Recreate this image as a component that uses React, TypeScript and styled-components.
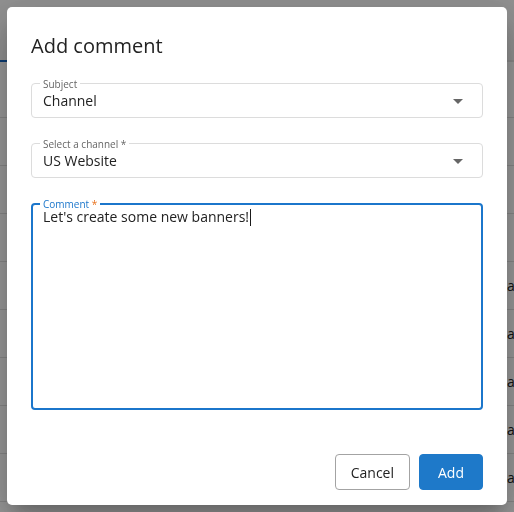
import { createGlobalStyle, styled } from "styled-components";

const GlobalStyle = createGlobalStyle`
  html, body {
    margin: 0;
    padding: 0;
    font-family: "Open Sans", "Noto Sans", Arial, sans-serif;
    background: #ffffff;
  }
`;

// page behind the dialog
const Page = styled.div`
  width: 514px;
  height: 512px;
  overflow: hidden;
`;

const Header = styled.div`
  height: 60px;
  background: #f2f2f2;
  border-bottom: 2px solid #e3e3e3;
  position: relative;
`;

const TabIndicator = styled.div`
  position: absolute;
  left: 0;
  bottom: -2px;
  width: 120px;
  height: 2px;
  background: #1565c0;
`;

const Row = styled.div<{ $first?: boolean }>`
  height: ${(p) => (p.$first ? 55 : 47)}px;
  border-bottom: 1px solid #e0e0e0;
  display: grid;
  grid-template-columns: 507px 1fr;
  align-items: center;
  font-size: 14px;
  color: #222;
`;

const Cell = styled.div`
  white-space: nowrap;
`;

// modal
const Backdrop = styled.div`
  position: fixed;
  inset: 0;
  background: rgba(0, 0, 0, 0.4);
  display: flex;
  align-items: center;
  justify-content: center;
`;

const Dialog = styled.div`
  width: 500px;
  height: 498px;
  box-sizing: border-box;
  padding: 25px 24px 15px;
  background: #fff;
  border-radius: 5px;
  box-shadow: 0 11px 15px -7px rgba(0, 0, 0, 0.2),
    0 24px 38px 3px rgba(0, 0, 0, 0.14), 0 9px 46px 8px rgba(0, 0, 0, 0.12);
  display: flex;
  flex-direction: column;
`;

const Title = styled.h2`
  margin: 0;
  font-size: 20px;
  line-height: 28px;
  font-weight: 400;
  color: #222;
`;

const Form = styled.div`
  margin-top: 23px;
  display: flex;
  flex-direction: column;
  gap: 25px;
`;

const Field = styled.div<{ $focused?: boolean; $height?: number }>`
  position: relative;
  box-sizing: border-box;
  height: ${(p) => p.$height ?? 35}px;
  border: ${(p) => (p.$focused ? "2px solid #1b76cb" : "1px solid #dcdcdc")};
  border-radius: 4px;
  padding: ${(p) => (p.$focused ? "2px 10px" : "7px 11px 6px")};
  display: flex;
  align-items: ${(p) => (p.$focused ? "flex-start" : "center")};
`;

const Label = styled.span<{ $focused?: boolean }>`
  position: absolute;
  top: ${(p) => (p.$focused ? -7 : -6)}px;
  left: ${(p) => (p.$focused ? 7 : 8)}px;
  padding: 0 3px;
  background: #fff;
  font-size: 10px;
  line-height: 12px;
  color: ${(p) => (p.$focused ? "#1b76cb" : "#666")};
`;

const Required = styled.span<{ $focused?: boolean }>`
  color: ${(p) => (p.$focused ? "#e8711c" : "inherit")};
`;

const Value = styled.div`
  flex: 1;
  font-size: 14px;
  line-height: 20px;
  color: #222;
  white-space: nowrap;
`;

const Caret = styled.span`
  display: inline-block;
  width: 1px;
  height: 17px;
  margin-left: 1px;
  vertical-align: -4px;
  background: #1a1a1a;
`;

const Arrow = styled.span`
  width: 0;
  height: 0;
  margin-right: 8px;
  border-left: 5px solid transparent;
  border-right: 5px solid transparent;
  border-top: 5px solid #666;
`;

const Actions = styled.div`
  margin-top: auto;
  display: flex;
  justify-content: flex-end;
  gap: 9px;
`;

const Button = styled.button<{ $primary?: boolean }>`
  height: 36px;
  min-width: 64px;
  box-sizing: border-box;
  padding: 0 15px;
  border-radius: 4px;
  font-family: inherit;
  font-size: 14px;
  cursor: pointer;
  border: 1px solid ${(p) => (p.$primary ? "#1e79c9" : "#a3a3a3")};
  background: ${(p) => (p.$primary ? "#1e79c9" : "#fff")};
  color: ${(p) => (p.$primary ? "#fff" : "#222")};
`;

const App = () => {
  const rowText = ["", "", "", "", "a", "a", "a", "a", "a"];
  return (
    <>
      <GlobalStyle />
      <Page>
        <Header>
          <TabIndicator />
        </Header>
        {rowText.map((t, i) => (
          <Row key={i} $first={i === 0}>
            <Cell />
            <Cell>{t && "abc"}</Cell>
          </Row>
        ))}
      </Page>

      <Backdrop>
        <Dialog>
          <Title>Add comment</Title>
          <Form>
            <Field>
              <Label>Subject</Label>
              <Value>Channel</Value>
              <Arrow />
            </Field>
            <Field>
              <Label>
                Select a channel <Required>*</Required>
              </Label>
              <Value>US Website</Value>
              <Arrow />
            </Field>
            <Field $focused $height={207}>
              <Label $focused>
                Comment <Required $focused>*</Required>
              </Label>
              <Value>
                Let's create some new banners!
                <Caret />
              </Value>
            </Field>
          </Form>
          <Actions>
            <Button>Cancel</Button>
            <Button $primary>Add</Button>
          </Actions>
        </Dialog>
      </Backdrop>
    </>
  );
};

export default App;
